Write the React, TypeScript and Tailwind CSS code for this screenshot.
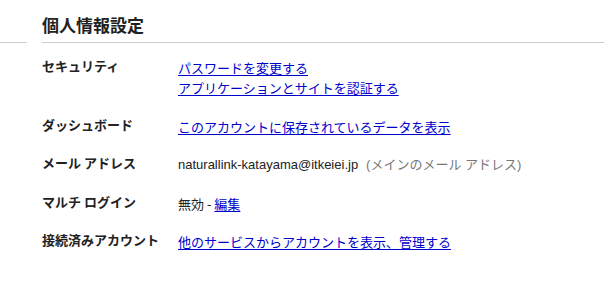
const link = "text-[#0000cc] underline underline-offset-2";
const latin = '"Liberation Sans", "Noto Sans CJK JP", sans-serif';

const rows = [
  {
    label: "セキュリティ",
    value: (
      <div className="flex flex-col">
        <a className={link}>パスワードを変更する</a>
        <a className={link}>アプリケーションとサイトを認証する</a>
      </div>
    ),
  },
  {
    label: "ダッシュボード",
    value: <a className={link}>このアカウントに保存されているデータを表示</a>,
  },
  {
    label: "メール アドレス",
    value: (
      <div style={{ fontFamily: latin }}>
        <span>naturallink-katayama@itkeiei.jp</span>
        <span className="ml-2 text-[#777]">(メインのメール アドレス)</span>
      </div>
    ),
  },
  {
    label: "マルチ ログイン",
    value: (
      <div>
        無効 - <a className={link}>編集</a>
      </div>
    ),
  },
  {
    label: "接続済みアカウント",
    value: <a className={link}>他のサービスからアカウントを表示、管理する</a>,
  },
];

export default function App() {
  return (
    <div className="w-[604px] h-[296px] bg-white text-[#222] font-['Noto_Sans_CJK_JP',sans-serif]">
      <div className="flex">
        <div className="w-[27px] border-b border-[#cccccc]" />
        <div className="ml-[15px] flex-1 border-b border-[#cccccc]">
          <h2 className="pt-[14px] pb-[6px] text-[17px] leading-[22px] font-bold text-[#222]">
            個人情報設定
          </h2>
        </div>
      </div>

      <div className="pl-[42px] pt-[15px] flex flex-col gap-y-[18.5px] text-[13px]">
        {rows.map((row) => (
          <div key={row.label} className="flex">
            <div className="w-[136px] shrink-0 font-bold leading-4">{row.label}</div>
            <div className="leading-5">{row.value}</div>
          </div>
        ))}
      </div>
    </div>
  );
}
